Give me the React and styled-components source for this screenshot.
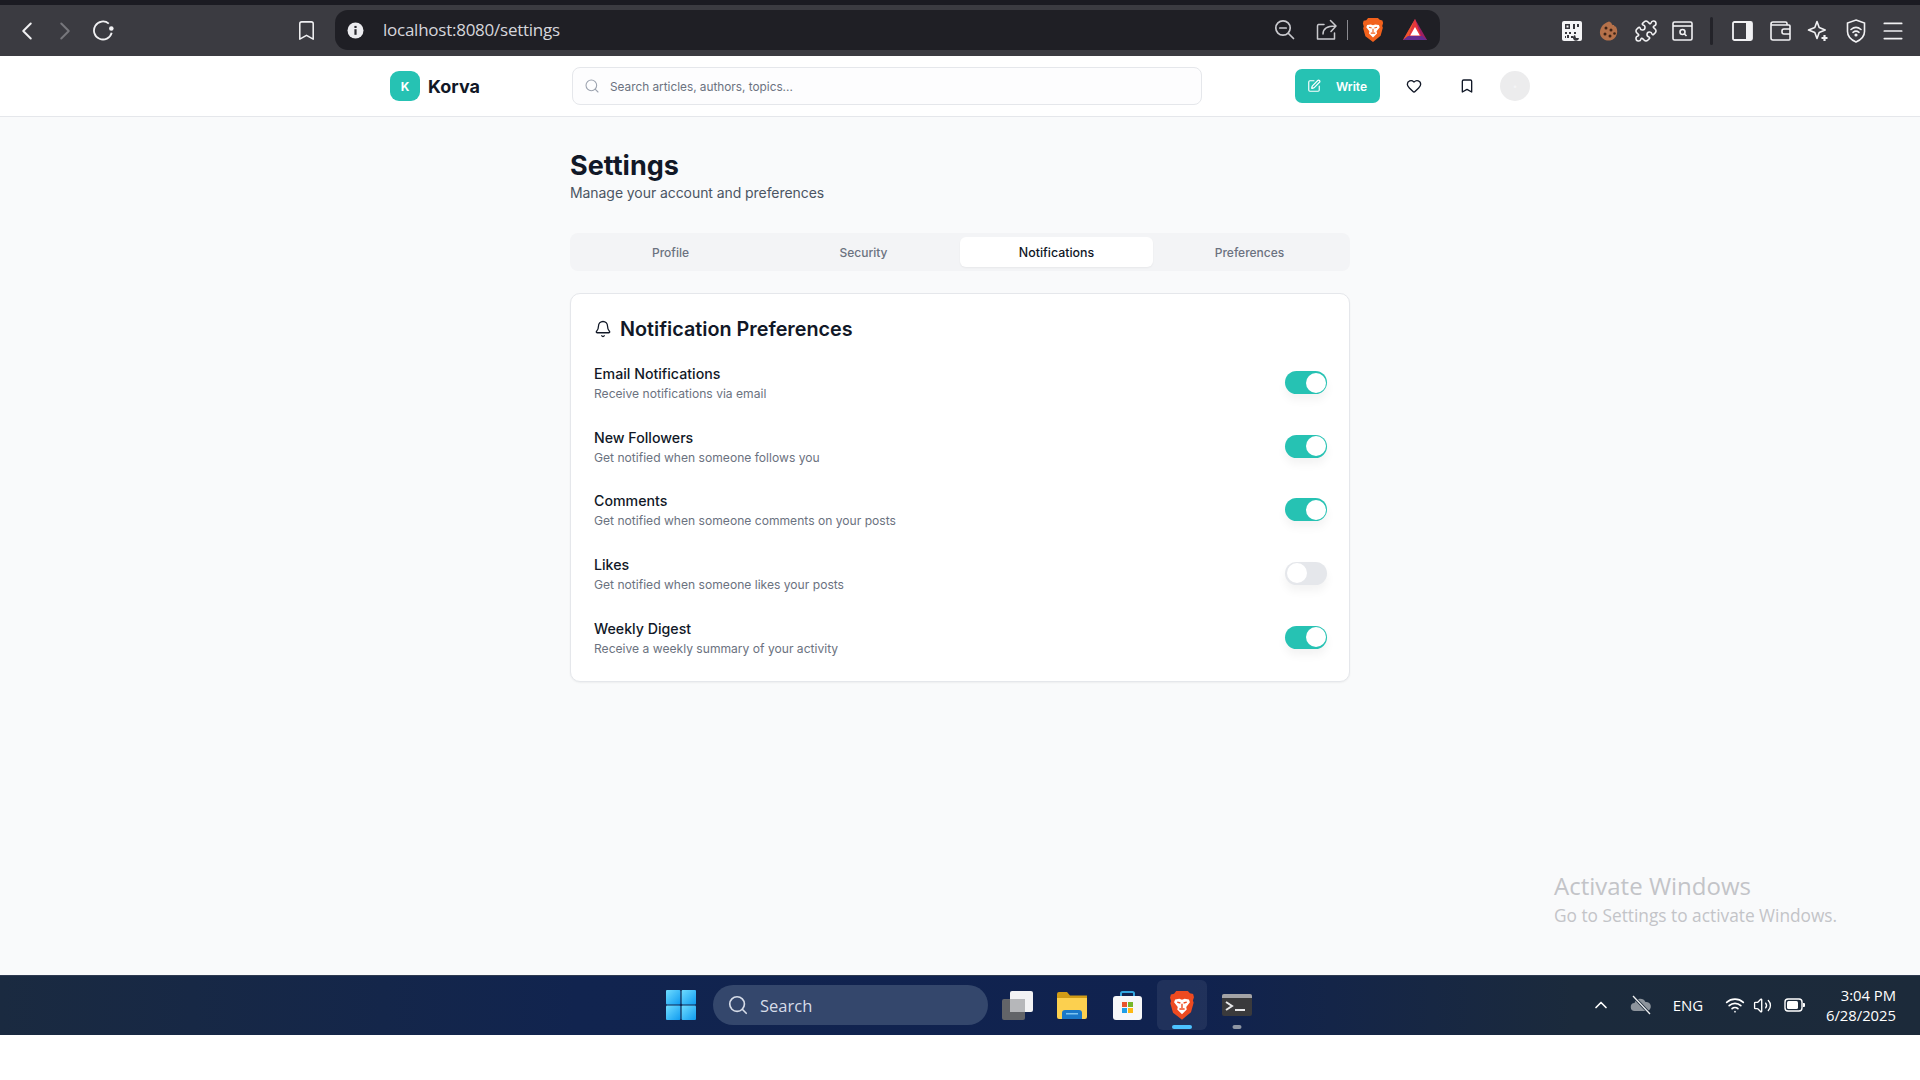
import React from 'react'
import styled, { createGlobalStyle } from 'styled-components'
import { ChevronLeft, ChevronRight, Bookmark, Puzzle, Menu, Search, SquarePen, Heart, Bell, ChevronUp, Wifi, Volume2 } from 'lucide-react'

const Global = createGlobalStyle`
    html, body { margin: 0; padding: 0; background: #fff; }
    body { font-family: Inter, "Liberation Sans", sans-serif; }
    * { box-sizing: border-box; }
`

const Page = styled.div`
    width: 1920px;
    height: 1080px;
    display: flex;
    flex-direction: column;
    position: relative;
    overflow: hidden;
`

const TopStrip = styled.div`
    height: 5px;
    background: #1b1b22;
`

const Toolbar = styled.div`
    height: 51px;
    display: flex;
    align-items: center;
    padding: 0 8px;
    background: #3b3b41;
    color: #f1f1f3;
`

const ToolSlot = styled.div`
    width: ${p => p.$w || 38}px;
    height: 38px;
    display: flex;
    align-items: center;
    justify-content: center;
    margin-left: ${p => p.$ml || 0}px;
    flex: none;
    color: ${p => p.$dim ? '#77777c' : 'inherit'};
`

const UrlPill = styled.div`
    width: 1105px;
    height: 40px;
    margin-left: 10px;
    margin-top: -1px;
    display: flex;
    align-items: center;
    padding-left: 12px;
    border-radius: 13px;
    background: #1f1f25;
`

const UrlText = styled.span`
    font-family: "Open Sans", sans-serif;
    font-size: 17px;
    color: #d6d6dc;
    margin: -1px 0 0 19px;
    letter-spacing: -0.25px;
`

const PillTools = styled.div`
    margin-left: auto;
    display: flex;
    align-items: center;
    padding-right: 8px;
    color: #c9c9ce;
`

const PillSlot = styled.div`
    width: ${p => p.$w}px;
    display: flex;
    justify-content: center;
    align-items: center;
`

const ThinRule = styled.div`
    width: 1px;
    height: 20px;
    background: #8a8a90;
`

const ToolRule = styled.div`
    width: 3px;
    height: 28px;
    margin: 0 11px 0 9px;
    border-radius: 2px;
    background: #232329;
`

const ExtGroup = styled.div`
    margin-left: auto;
    display: flex;
    align-items: center;
`

const Header = styled.header`
    height: 61px;
    background: #fff;
    border-bottom: 1px solid #e5e7eb;
    flex: none;
`

const HeaderInner = styled.div`
    width: 1140px;
    height: 60px;
    margin: 0 auto;
    display: flex;
    align-items: center;
`

const Brand = styled.div`
    width: 182px;
    display: flex;
    align-items: center;
    gap: 8px;
`

const LogoMark = styled.div`
    width: 30px;
    height: 30px;
    display: flex;
    align-items: center;
    justify-content: center;
    border-radius: 9px;
    background: #26c2b3;
    color: #fff;
    font-size: 12px;
    font-weight: 700;
`

const BrandName = styled.span`
    font-size: 18px;
    font-weight: 700;
    color: #111827;
`

const SearchBox = styled.div`
    width: 630px;
    height: 38px;
    display: flex;
    align-items: center;
    gap: 10px;
    padding-left: 11px;
    border: 1px solid #e5e7eb;
    border-radius: 8px;
    background: #fdfdfe;
    color: #9ca3af;
`

const SearchText = styled.span`
    font-size: 11.8px;
    margin-top: 1px;
    color: #6b7280;
`

const Actions = styled.div`
    margin-left: auto;
    display: flex;
    align-items: center;
    gap: 13px;
`

const WriteButton = styled.button`
    width: 85px;
    height: 34px;
    margin-right: 1px;
    display: flex;
    align-items: center;
    gap: 15px;
    padding: 0 0 0 12px;
    border: 0;
    border-radius: 7px;
    background: #26c2b3;
    color: #fff;
    font: 600 12px Inter, sans-serif;
`

const IconButton = styled.div`
    width: 40px;
    height: 34px;
    display: flex;
    align-items: center;
    justify-content: center;
    color: #111827;
`

const Avatar = styled.div`
    width: 30px;
    height: 30px;
    display: flex;
    align-items: center;
    justify-content: center;
    border-radius: 50%;
    background: #ececed;
    color: #f4f4f5;
    font-size: 8px;
`

const Main = styled.main`
    flex: 1;
    position: relative;
    display: flex;
    flex-direction: column;
    align-items: center;
    padding-top: 32px;
    background: #f9fafb;
`

const Content = styled.div`
    width: 780px;
`

const Title = styled.h1`
    margin: 0;
    font-size: 27px;
    line-height: 34px;
    font-weight: 700;
    color: #111827;
`

const Subtitle = styled.p`
    margin: 0;
    font-size: 14px;
    line-height: 20px;
    letter-spacing: -0.07px;
    color: #4b5563;
`

const Tabs = styled.div`
    height: 38px;
    margin-top: 30px;
    padding: 4px;
    display: grid;
    grid-template-columns: repeat(4, 1fr);
    border-radius: 8px;
    background: #f3f4f6;
`

const Tab = styled.div`
    display: flex;
    align-items: center;
    justify-content: center;
    border-radius: 6px;
    font-size: ${p => p.$active ? 12.4 : 12}px;
    font-weight: 500;
    color: ${p => p.$active ? '#111827' : '#6b7280'};
    background: ${p => p.$active ? '#fff' : 'transparent'};
    box-shadow: ${p => p.$active ? '0 1px 2px rgba(0,0,0,.05)' : 'none'};
`

const Card = styled.section`
    margin-top: 22px;
    height: 389px;
    padding: 25px 22px 0 23px;
    border: 1px solid #e5e7eb;
    border-radius: 10px;
    background: #fff;
    box-shadow: 0 1px 2px rgba(0,0,0,.05);
`

const CardTitle = styled.h2`
    margin: 0 0 25px;
    height: 20px;
    display: flex;
    align-items: center;
    gap: 8px;
    font-size: 19.8px;
    line-height: 20px;
    font-weight: 600;
    color: #111827;
`

const Rows = styled.div`
    display: grid;
    grid-auto-rows: 38px;
    row-gap: 25.67px;
`

const Row = styled.div`
    display: flex;
    align-items: center;
    justify-content: space-between;
`

const RowLabel = styled.div`
    font-size: 14.2px;
    line-height: 20px;
    font-weight: 500;
    color: #111827;
`

const RowHint = styled.div`
    margin-top: 2px;
    font-size: 12.1px;
    line-height: 16px;
    color: #6b7280;
`

const Toggle = styled.div`
    width: 42px;
    height: 23px;
    margin-top: -1px;
    padding: 1.5px;
    display: flex;
    justify-content: ${p => p.$on ? 'flex-end' : 'flex-start'};
    border-radius: 12px;
    background: ${p => p.$on ? '#26c2b3' : '#e5e7eb'};
    box-shadow: 0 6px 10px rgba(0,0,0,.05);
`

const Knob = styled.div`
    width: 20px;
    height: 20px;
    border-radius: 50%;
    background: #fff;
`

const Watermark = styled.div`
    position: absolute;
    left: 1554px;
    top: 752px;
    font-family: "Open Sans", sans-serif;
    color: #c3c4c8;
`

const WatermarkBig = styled.div`
    font-size: 24px;
    line-height: 34px;
`

const WatermarkSmall = styled.div`
    font-size: 17.3px;
    line-height: 26px;
`

const Taskbar = styled.footer`
    height: 60px;
    flex: none;
    display: flex;
    align-items: center;
    padding: 0 24px 1px 666px;
    border-top: 1px solid #2e3a50;
    background: linear-gradient(90deg, #1a2a40 0%, #11244f 30%, #10224f 62%, #1b2a3c 82%, #1c2a3a 100%);
    color: #fff;
`

const TaskSearch = styled.div`
    width: 275px;
    height: 40px;
    margin-left: 17px;
    display: flex;
    align-items: center;
    gap: 11px;
    padding-left: 14px;
    border-radius: 20px;
    background: #34476c;
    color: #d6dce8;
    font-family: "Open Sans", sans-serif;
    font-size: 16.5px;
`

const TaskIcons = styled.div`
    margin-left: 4px;
    display: flex;
    gap: 5px;
`

const TaskSlot = styled.div`
    width: 50px;
    height: 50px;
    position: relative;
    display: flex;
    align-items: center;
    justify-content: center;
    border-radius: 6px;
    background: ${p => p.$active ? 'rgba(255,255,255,.07)' : 'transparent'};
`

const TaskMark = styled.div`
    position: absolute;
    left: 50%;
    bottom: 1px;
    width: ${p => p.$active ? 20 : 9}px;
    height: 4px;
    transform: translateX(-50%);
    border-radius: 2px;
    background: ${p => p.$active ? '#4cc2ff' : '#8f96a3'};
`

const Tray = styled.div`
    margin-left: auto;
    display: flex;
    align-items: center;
    font-family: "Open Sans", sans-serif;
    font-size: 15px;
    color: #fff;
`

const TraySlot = styled.div`
    width: ${p => p.$w}px;
    margin-left: ${p => p.$ml || 0}px;
    display: flex;
    justify-content: center;
    align-items: center;
`

const Clock = styled.div`
    margin-left: 18px;
    text-align: right;
    font-size: 14.8px;
    line-height: 20px;
`

const Reload = () => (
    <svg width="22" height="22" viewBox="0 0 22 22" fill="none" stroke="currentColor" strokeWidth="1.8">
        <path d="M16.800 3.600A9 9 0 1 0 19.700 12.800" />
        <circle cx="19.300" cy="8.500" r="2.300" fill="currentColor" stroke="none" />
    </svg>
)

const InfoDot = () => (
    <svg width="17" height="17" viewBox="0 0 17 17">
        <circle cx="8.500" cy="8.500" r="8" fill="#ececf0" />
        <rect x="7.400" y="7.200" width="2.200" height="5.600" fill="#2a2a30" />
        <rect x="7.400" y="3.900" width="2.200" height="2.100" fill="#2a2a30" />
    </svg>
)

const ZoomOut = () => (
    <svg width="21" height="21" viewBox="0 0 21 21" fill="none" stroke="currentColor" strokeWidth="1.700" strokeLinecap="round">
        <circle cx="9" cy="9" r="7.200" />
        <path d="M5.800 9h6.400M14.500 14.500l5 5" />
    </svg>
)

const ShareOut = () => (
    <svg width="21" height="21" viewBox="0 0 21 21" fill="none" stroke="currentColor" strokeWidth="1.500" strokeLinecap="round" strokeLinejoin="round">
        <path d="M8 5.500H2.500a1.500 1.500 0 0 0-1 1.300V20h17V14" />
        <path d="M7 15c0-5 4-8 12-8M14.500 1.500L20 7l-5 5.500" />
    </svg>
)

const BraveLion = ({ size = 22, color = '#f2611c' }) => (
    <svg width={size} height={size * 1.14} viewBox="0 0 24 28">
        <path d="M6.500 1h11l2 2 3 .8.800 3-1 3.200.700 2-2.500 9L12 28l-8.500-6.500-2.500-9 .700-2-1-3.200.800-3 3-.8z" fill={color} />
        <path d="M5.500 9l4-.7L12 9.300l2.500-1 4 .7 1 2.500-3.500 4.500.500 2.500L12 23l-4.500-4.500.500-2.500L4.500 11.500z" fill="#fff" />
        <path d="M7.500 11.500l3 .8M16.500 11.500l-3 .8M12 13v4M9.500 18h5" stroke={color} strokeWidth="1.300" fill="none" />
    </svg>
)

const BatTriangle = () => (
    <svg width="24" height="21" viewBox="0 0 24 21">
        <path d="M12 0L0 21h24z" fill="#9e1f63" />
        <path d="M12 0L0 21l6-4z" fill="#f0562a" />
        <path d="M12 0l-6 17h12z" fill="#e8373a" />
        <path d="M0 21l5-4h14l5 4z" fill="#662d91" />
        <path d="M12 8l-4.800 8.500h9.600z" fill="#fff" />
    </svg>
)

const QrTile = () => (
    <svg width="20" height="20" viewBox="0 0 20 20">
        <rect width="20" height="20" rx="2" fill="#f4f4f6" />
        <path d="M3 3h5v5H3zM11 3h2v5h-2zM15 3h2v3h-2zM3 11h2v2H3zM7 11h2v2H7zM5 14h2v3H5zM3 15h1v2H3zM9 15h2v2H9zM12 11h2v2h-2z" fill="#35353b" />
        <path d="M13 14a3 3 0 1 0 4 3h-3z" fill="#35353b" />
        <rect x="4.500" y="4.500" width="2" height="2" fill="#f4f4f6" />
    </svg>
)

const Cookie = () => (
    <svg width="20" height="22" viewBox="0 0 20 22">
        <path d="M10 1.500c1 .2 1.500 1 2.500 1.500-.2 1.500 1.300 2.300 2.500 2 .2 1 1 1.500 2 1.700 1.700 3 1.700 7-.3 10S11 21 8 20.500 1.500 17.500 1 13.500 3 3.500 10 1.500z" fill="#b5714a" />
        <circle cx="7" cy="8" r="1.500" fill="#3d2316" />
        <circle cx="12" cy="10" r="1.500" fill="#3d2316" />
        <circle cx="6" cy="14" r="1.500" fill="#3d2316" />
        <circle cx="11" cy="16" r="1.500" fill="#3d2316" />
        <circle cx="15.500" cy="13.500" r="1.300" fill="#3d2316" />
    </svg>
)

const WindowSearch = () => (
    <svg width="21" height="20" viewBox="0 0 21 20" fill="none" stroke="currentColor" strokeWidth="1.600">
        <rect x="1" y="1" width="19" height="18" rx="1.500" />
        <path d="M1 5h19" />
        <circle cx="10.500" cy="11" r="2.500" />
        <path d="M12.500 13l2 2" />
    </svg>
)

const SidePanel = () => (
    <svg width="21" height="20" viewBox="0 0 21 20">
        <rect x="1" y="1" width="19" height="18" rx="1.500" fill="none" stroke="currentColor" strokeWidth="1.800" />
        <rect x="14" y="1" width="6" height="18" fill="currentColor" />
    </svg>
)

const WalletIcon = () => (
    <svg width="21" height="20" viewBox="0 0 21 20" fill="none" stroke="currentColor" strokeWidth="1.600" strokeLinejoin="round">
        <path d="M17 4V2.500A1.500 1.500 0 0 0 15.500 1H3a2 2 0 0 0-2 2v14a2 2 0 0 0 2 2h16a1 1 0 0 0 1-1V5a1 1 0 0 0-1-1H1" />
        <path d="M20 8h-6a2 2 0 0 0-2 2v1a2 2 0 0 0 2 2h6" />
    </svg>
)

const SparkIcon = () => (
    <svg width="22" height="22" viewBox="0 0 22 22" fill="none" stroke="currentColor" strokeWidth="1.600" strokeLinejoin="round">
        <path d="M10 1.500l2.200 6 6 2.500-6 2.500L10 18.500l-2.200-6L1.500 10l6.300-2.500z" />
        <path d="M17.500 15v6M14.500 18h6" strokeWidth="2.200" />
    </svg>
)

const ShieldWifi = () => (
    <svg width="20" height="24" viewBox="0 0 20 24" fill="none" stroke="currentColor" strokeWidth="1.600" strokeLinecap="round">
        <path d="M10 1l8.500 3v8.500c0 5-4 8.500-8.500 10.500C5.500 21 1.500 17.500 1.500 12.500V4z" />
        <path d="M5 10.500c3-2.500 7-2.500 10 0M7 13.300c2-1.500 4-1.500 6 0" />
        <circle cx="10" cy="16" r=".8" fill="currentColor" />
    </svg>
)

const WinLogo = () => (
    <svg width="30" height="30" viewBox="0 0 30 30">
        <defs>
            <linearGradient id="pane" x1="0" y1="0" x2="1" y2="1">
                <stop offset="0" stopColor="#6fdcff" />
                <stop offset="1" stopColor="#0f9bf0" />
            </linearGradient>
        </defs>
        <rect x="0" y="0" width="14.400" height="14.400" rx="1" fill="url(#pane)" />
        <rect x="15.600" y="0" width="14.400" height="14.400" rx="1" fill="url(#pane)" />
        <rect x="0" y="15.600" width="14.400" height="14.400" rx="1" fill="url(#pane)" />
        <rect x="15.600" y="15.600" width="14.400" height="14.400" rx="1" fill="url(#pane)" />
    </svg>
)

const TaskView = () => (
    <svg width="31" height="29" viewBox="0 0 31 29">
        <rect x="0" y="8" width="23" height="21" rx="2" fill="#626468" />
        <rect x="8" y="0" width="23" height="21" rx="2" fill="#f2f2f4" />
        <rect x="8" y="8" width="15" height="13" fill="#b6b7ba" />
    </svg>
)

const FolderIcon = () => (
    <svg width="30" height="27" viewBox="0 0 30 27">
        <path d="M0 2a2 2 0 0 1 2-2h8l3 3.500h17V8H0z" fill="#d19c16" />
        <path d="M0 6h30v19a2 2 0 0 1-2 2H2a2 2 0 0 1-2-2z" fill="#fcd04f" />
        <path d="M5 27v-6a3 3 0 0 1 3-3h14a3 3 0 0 1 3 3v6z" fill="#1a78c9" />
        <rect x="9" y="21" width="12" height="1.500" fill="#7cc4f0" />
    </svg>
)

const StoreIcon = () => (
    <svg width="29" height="29" viewBox="0 0 29 29">
        <path d="M8 7V2.500a1.500 1.500 0 0 1 1.500-1.500h10A1.500 1.500 0 0 1 21 2.500V7" fill="none" stroke="#32a6e0" strokeWidth="2" />
        <rect y="5" width="29" height="24" rx="3" fill="#f6f7f9" />
        <rect x="9" y="11" width="5" height="5" fill="#e8552f" />
        <rect x="15" y="11" width="5" height="5" fill="#76b72a" />
        <rect x="9" y="17" width="5" height="5" fill="#1f9fe8" />
        <rect x="15" y="17" width="5" height="5" fill="#fdb813" />
    </svg>
)

const TerminalIcon = () => (
    <svg width="30" height="22" viewBox="0 0 30 22">
        <rect width="30" height="22" rx="2" fill="#3a3a3c" />
        <path d="M0 2a2 2 0 0 1 2-2h26a2 2 0 0 1 2 2v2H0z" fill="#a3a3a6" />
        <path d="M4 8l6 4-6 4" fill="none" stroke="#e8e8ea" strokeWidth="2" />
        <rect x="13" y="15" width="10" height="2" fill="#e8e8ea" />
    </svg>
)

const CloudOff = () => (
    <svg width="22" height="20" viewBox="0 0 22 20">
        <path d="M5 16a4 4 0 0 1-.5-8A6 6 0 0 1 15.500 7a4.500 4.500 0 0 1 1.500 9z" fill="#8d949c" />
        <path d="M3 1l17 18" stroke="#1c2a3a" strokeWidth="3" />
        <path d="M3 1l17 18" stroke="#eef0f2" strokeWidth="1.300" />
    </svg>
)

const Battery = () => (
    <svg width="21" height="14" viewBox="0 0 21 14">
        <rect x="1" y="1" width="17" height="12" rx="3" fill="none" stroke="#fff" strokeWidth="1.400" />
        <rect x="3" y="3" width="11" height="8" rx="1.500" fill="#fff" />
        <path d="M19 5h1a1 1 0 0 1 1 1v2a1 1 0 0 1-1 1h-1z" fill="#fff" />
    </svg>
)

const tabs = ['Profile', 'Security', 'Notifications', 'Preferences']

const rows = [
    { label: 'Email Notifications', hint: 'Receive notifications via email', on: true },
    { label: 'New Followers', hint: 'Get notified when someone follows you', on: true },
    { label: 'Comments', hint: 'Get notified when someone comments on your posts', on: true },
    { label: 'Likes', hint: 'Get notified when someone likes your posts', on: false },
    { label: 'Weekly Digest', hint: 'Receive a weekly summary of your activity', on: true },
]

const BottomGap = styled.div`
    height: 45px;
    flex: none;
    background: #fff;
`

export default function App() {
    return (
        <Page>
            <Global />
            <TopStrip />
            <Toolbar>
                <ToolSlot><ChevronLeft size={30} strokeWidth={1.6} /></ToolSlot>
                <ToolSlot $dim><ChevronRight size={30} strokeWidth={1.6} /></ToolSlot>
                <ToolSlot><Reload /></ToolSlot>
                <ToolSlot $ml={165}><Bookmark size={23} strokeWidth={1.6} /></ToolSlot>
                <UrlPill>
                    <InfoDot />
                    <UrlText>localhost:8080/settings</UrlText>
                    <PillTools>
                        <PillSlot $w={42}><ZoomOut /></PillSlot>
                        <PillSlot $w={42}><ShareOut /></PillSlot>
                        <ThinRule />
                        <PillSlot $w={50}><BraveLion /></PillSlot>
                        <PillSlot $w={34}><BatTriangle /></PillSlot>
                    </PillTools>
                </UrlPill>
                <ExtGroup>
                    <ToolSlot $w={37}><QrTile /></ToolSlot>
                    <ToolSlot $w={37}><Cookie /></ToolSlot>
                    <ToolSlot $w={37}><Puzzle size={24} strokeWidth={1.6} /></ToolSlot>
                    <ToolSlot $w={37}><WindowSearch /></ToolSlot>
                    <ToolRule />
                    <ToolSlot $w={37.6}><SidePanel /></ToolSlot>
                    <ToolSlot $w={37.6}><WalletIcon /></ToolSlot>
                    <ToolSlot $w={37.6}><SparkIcon /></ToolSlot>
                    <ToolSlot $w={37.6}><ShieldWifi /></ToolSlot>
                    <ToolSlot $w={37.6}><Menu size={26} strokeWidth={1.6} /></ToolSlot>
                </ExtGroup>
            </Toolbar>
            <Header>
                <HeaderInner>
                    <Brand>
                        <LogoMark>K</LogoMark>
                        <BrandName>Korva</BrandName>
                    </Brand>
                    <SearchBox>
                        <Search size={16} strokeWidth={1.6} />
                        <SearchText>Search articles, authors, topics...</SearchText>
                    </SearchBox>
                    <Actions>
                        <WriteButton><SquarePen size={14} strokeWidth={2} />Write</WriteButton>
                        <IconButton><Heart size={16} strokeWidth={2} /></IconButton>
                        <IconButton><Bookmark size={16} strokeWidth={2} /></IconButton>
                        <Avatar>•</Avatar>
                    </Actions>
                </HeaderInner>
            </Header>
            <Main>
                <Content>
                    <Title>Settings</Title>
                    <Subtitle>Manage your account and preferences</Subtitle>
                    <Tabs>
                        {tabs.map(t => <Tab key={t} $active={t === 'Notifications'}>{t}</Tab>)}
                    </Tabs>
                    <Card>
                        <CardTitle><Bell size={18} strokeWidth={1.7} />Notification Preferences</CardTitle>
                        <Rows>
                            {rows.map(r => (
                                <Row key={r.label}>
                                    <div>
                                        <RowLabel>{r.label}</RowLabel>
                                        <RowHint>{r.hint}</RowHint>
                                    </div>
                                    <Toggle $on={r.on}><Knob /></Toggle>
                                </Row>
                            ))}
                        </Rows>
                    </Card>
                </Content>
                <Watermark>
                    <WatermarkBig>Activate Windows</WatermarkBig>
                    <WatermarkSmall>Go to Settings to activate Windows.</WatermarkSmall>
                </Watermark>
            </Main>
            <Taskbar>
                <WinLogo />
                <TaskSearch><Search size={22} strokeWidth={1.8} />Search</TaskSearch>
                <TaskIcons>
                    <TaskSlot><TaskView /></TaskSlot>
                    <TaskSlot><FolderIcon /></TaskSlot>
                    <TaskSlot><StoreIcon /></TaskSlot>
                    <TaskSlot $active><BraveLion size={26} color="#ee4a20" /><TaskMark $active /></TaskSlot>
                    <TaskSlot><TerminalIcon /><TaskMark /></TaskSlot>
                </TaskIcons>
                <Tray>
                    <TraySlot $w={24}><ChevronUp size={20} strokeWidth={2} /></TraySlot>
                    <TraySlot $w={32} $ml={12}><CloudOff /></TraySlot>
                    <TraySlot $w={32} $ml={15}>ENG</TraySlot>
                    <TraySlot $w={26} $ml={18}><Wifi size={20} strokeWidth={2} /></TraySlot>
                    <TraySlot $w={26} $ml={2}><Volume2 size={19} strokeWidth={1.7} /></TraySlot>
                    <TraySlot $w={26} $ml={6}><Battery /></TraySlot>
                    <Clock>3:04 PM<br />6/28/2025</Clock>
                </Tray>
            </Taskbar>
            <BottomGap />
        </Page>
    )
}
